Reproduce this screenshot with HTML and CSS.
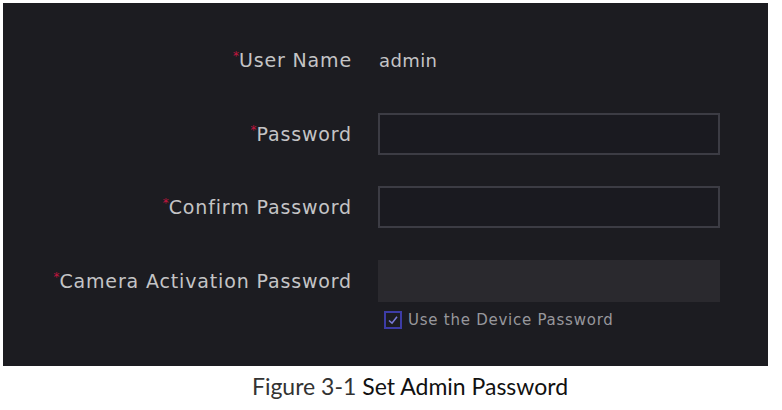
FILE: index.html
```html
<!DOCTYPE html>
<html lang="en">
<head>
    <meta charset="UTF-8">
    <meta name="viewport" content="width=device-width, initial-scale=1.0">
    <title>Set Admin Password</title>
    <link rel="stylesheet" href="styles.css">
</head>
<body>
    <div class="top-strip"></div>
    <div class="panel">
        <form class="admin-form" id="adminForm">
            <label class="field-label"><span class="req">*</span>User Name</label>
            <div class="field-value">admin</div>

            <label class="field-label" for="password"><span class="req">*</span>Password</label>
            <input class="field-input" type="password" id="password" name="password">

            <label class="field-label" for="confirm"><span class="req">*</span>Confirm Password</label>
            <input class="field-input" type="password" id="confirm" name="confirm">

            <label class="field-label" for="camera"><span class="req">*</span>Camera Activation Password</label>
            <input class="field-input disabled" type="password" id="camera" name="camera" disabled>

            <div></div>
            <label class="check-row">
                <span class="check-box">
                    <svg width="12" height="12" viewBox="0 0 12 12">
                        <path d="M2 6.5 L5 9.2 L10 2.8" fill="none" stroke="#7a7ad8" stroke-width="1.6"/>
                    </svg>
                </span>
                Use the Device Password
            </label>
        </form>
    </div>
    <div class="caption"><span class="fig-num">Figure 3-1</span> Set Admin Password</div>
</body>
</html>
```

FILE: styles.css
```css
/* Page */
body {
    margin: 0;
    background-color: #fff;
    font-family: "DejaVu Sans", Arial, sans-serif;
}

.top-strip {
    height: 3px;
}

/* Dark dialog area */
.panel {
    margin-left: 3px;
    width: 765px;
    height: 363px;
    box-sizing: border-box;
    padding-top: 36px;
    background-color: #1c1c21;
}

/* Form grid */
.admin-form {
    display: grid;
    grid-template-columns: 348px 342px;
    grid-auto-rows: 42px;
    column-gap: 27px;
    row-gap: 31.5px;
}

.field-label {
    display: flex;
    align-items: center;
    justify-content: flex-end;
    color: #c4c4c6;
    font-size: 19px;
    letter-spacing: 0.85px;
    margin-right: -1px;
}

.req {
    color: #c2153f;
    font-size: 12px;
    align-self: flex-start;
    margin-top: 10px;
    letter-spacing: 0;
}

.field-value {
    display: flex;
    align-items: center;
    color: #c4c4c6;
    font-size: 18px;
    letter-spacing: 0.4px;
    padding-left: 1px;
}

.field-input {
    box-sizing: border-box;
    width: 342px;
    height: 42px;
    margin: 0;
    background-color: #1a1a20;
    border: 2px solid #3c3c44;
    outline: none;
}

.field-input.disabled {
    background-color: #2a292e;
    border: none;
}

/* Checkbox row */
.check-row {
    margin-top: -23px;
    height: 20px;
    display: flex;
    align-items: center;
    gap: 6px;
    padding-left: 6px;
    color: #97979c;
    font-size: 15px;
    letter-spacing: 0.75px;
}

.check-box {
    box-sizing: border-box;
    width: 18px;
    height: 18px;
    border: 2px solid #3d3ca6;
    display: flex;
    align-items: center;
    justify-content: center;
}

/* Figure caption */
.caption {
    height: 40px;
    display: flex;
    align-items: center;
    justify-content: center;
    padding-left: 38px;
    font-family: Lato, "Open Sans", sans-serif;
    font-size: 23px;
    color: #111;
}

.fig-num {
    color: #333;
    margin-right: 6px;
}
```
